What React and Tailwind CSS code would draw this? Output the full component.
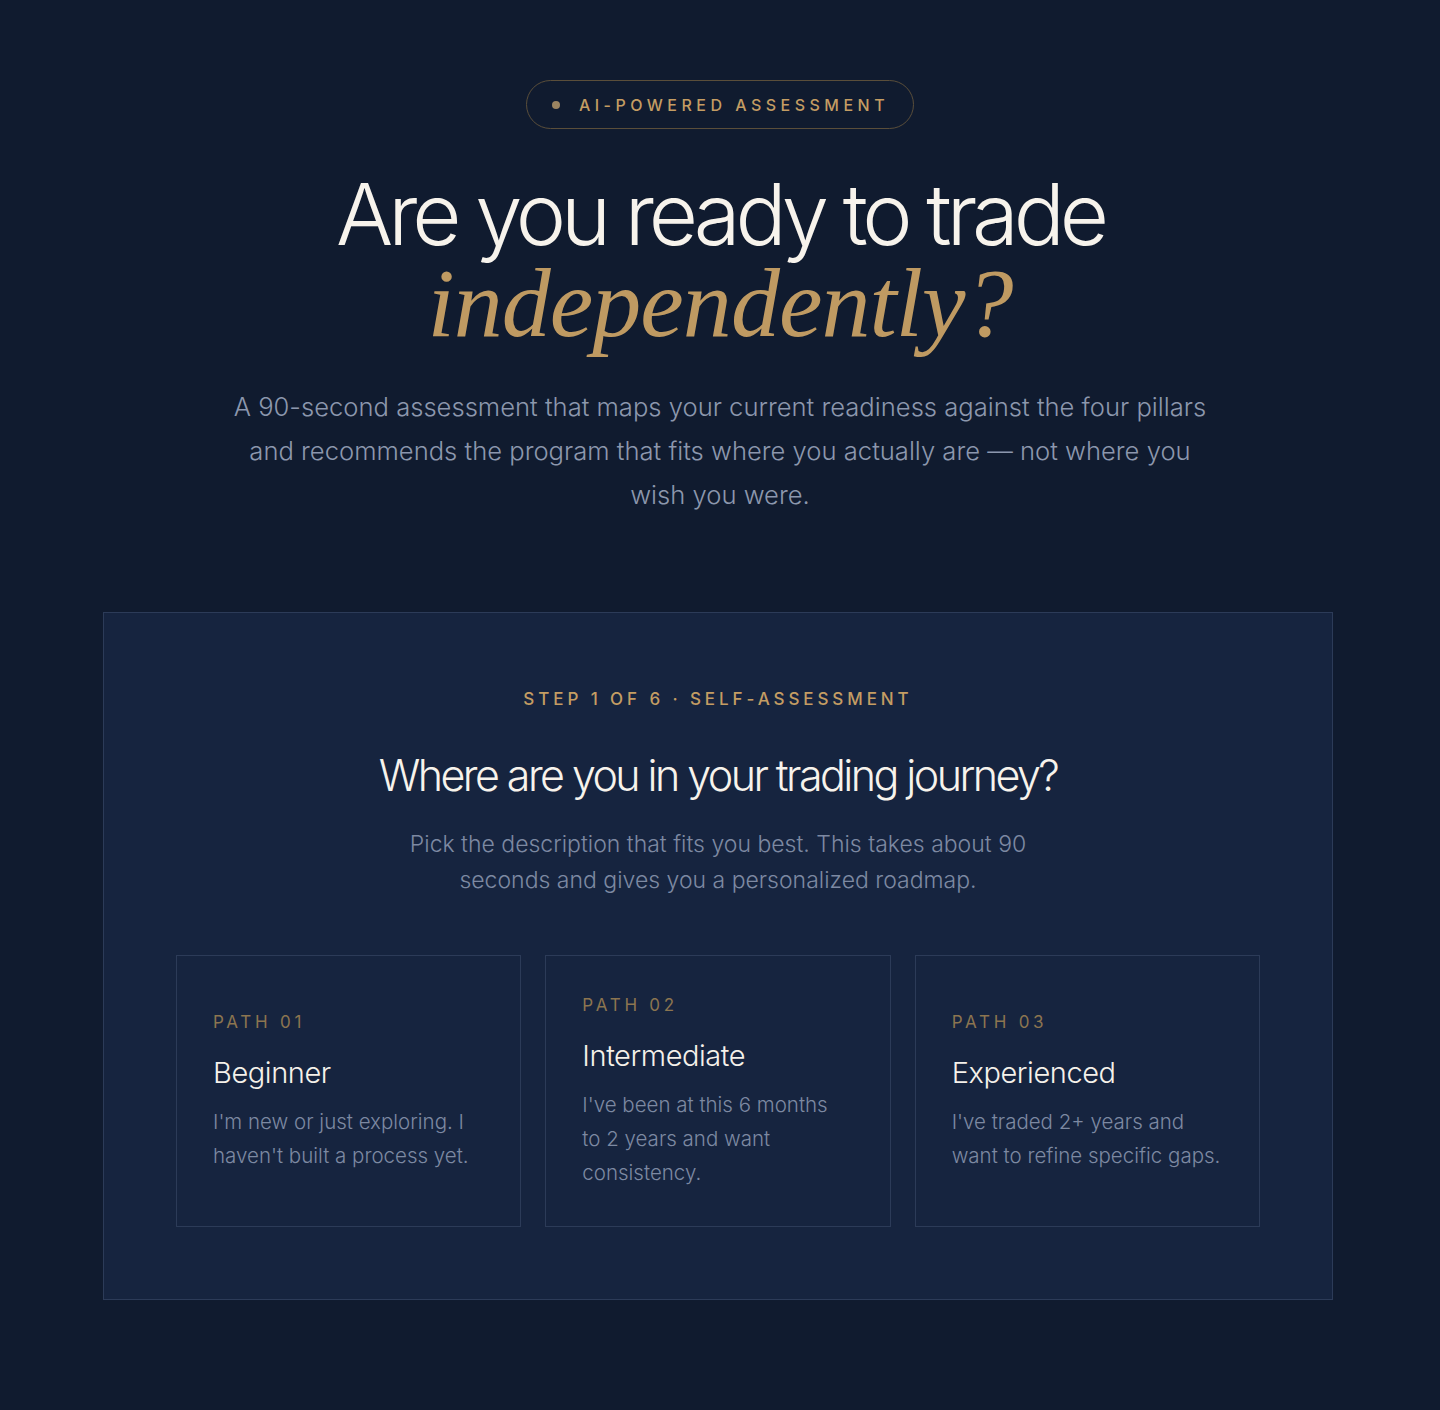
const paths = [
  { label: "PATH 01", title: "Beginner", text: "I'm new or just exploring. I haven't built a process yet." },
  { label: "PATH 02", title: "Intermediate", text: "I've been at this 6 months to\u00a02 years and want consistency." },
  { label: "PATH 03", title: "Experienced", text: "I've traded 2+ years and want to refine specific gaps." }
];

const sans = { fontFamily: "Inter, 'Noto Sans', sans-serif" };

function PathCard({ path }) {
  return (
    <button type="button" className="flex h-[272px] flex-col justify-center border border-[#2c3b58] bg-[#16243f] px-9 text-left">
      <span className="text-[17px] font-normal tracking-[0.22em] text-[#8c7550]">{path.label}</span>
      <span className="mt-[20px] text-[29px] font-light leading-tight tracking-[-0.015em] text-[#f5f1ea]">{path.title}</span>
      <span className="mt-[13px] text-[20.5px] font-light leading-[34px] text-[#7d89a2]">{path.text}</span>
    </button>
  );
}

export default function App() {
  return (
    <div className="min-h-[1410px] bg-[#101b2f] pt-20 pb-[110px]" style={sans}>
      <div className="flex flex-col items-center text-center">
        <div className="flex h-[49px] items-center gap-[19px] rounded-full border border-[#5a4e3a] pl-[25px] pr-[24px]">
          <span className="h-[8px] w-[8px] rounded-full bg-[#9b8461]" />
          <span className="text-[16px] font-medium tracking-[0.28em] text-[#c49d63]">AI-POWERED ASSESSMENT</span>
        </div>
        <h1 className="mt-[42px] font-light text-[#f7f3ec]">
          <span className="block text-[85px] leading-[88px] tracking-[-0.06em]">Are you ready to trade</span>
          <span
            className="block text-[98px] leading-[88px] text-[#bf9a62] italic tracking-[-0.01em]"
            style={{ fontFamily: "'Liberation Serif', 'DejaVu Serif', serif" }}
          >
            independently?
          </span>
        </h1>
        <p className="mt-[38px] max-w-[985px] text-[25.6px] font-light leading-[44px] text-[#8c97ad]">
          A 90-second assessment that maps your current readiness against the four pillars and recommends the program that fits where you actually are — not where you wish you were.
        </p>
      </div>

      <section className="mx-auto mt-[95px] w-[1230px] -translate-x-[2px] border border-[#2c3b58] bg-[#16243f] px-[72px] pt-[74px] pb-[72px]">
        <div className="flex flex-col items-center text-center">
          <p className="text-[17px] font-medium tracking-[0.23em] text-[#c49d63]">STEP 1 OF 6 · SELF-ASSESSMENT</p>
          <h2 className="mt-[36px] text-[43px] font-light leading-tight tracking-[-0.06em] text-[#f7f3ec]">Where are you in your trading journey?</h2>
          <p className="mt-[24px] max-w-[660px] text-[23px] font-light leading-[36px] text-[#7d89a2]">
            Pick the description that fits you best. This takes about 90 seconds and gives you a personalized roadmap.
          </p>
        </div>
        <div className="mt-[57px] grid grid-cols-3 gap-[24px]">
          {paths.map((p) => (
            <PathCard key={p.label} path={p} />
          ))}
        </div>
      </section>
    </div>
  );
}
